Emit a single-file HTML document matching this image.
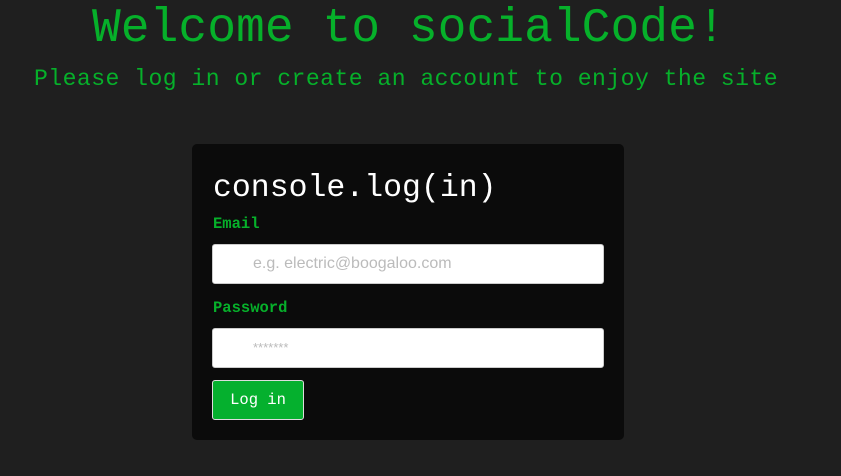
<!DOCTYPE html>
<html><head><style>
body{margin:0;width:841px;height:476px;background:#1f1f1f;position:relative;overflow:hidden;font-family:"Liberation Mono",monospace}
.a{position:absolute;white-space:nowrap}
h1{margin:0;position:absolute;left:92px;top:4px;font-size:48px;font-weight:normal;color:#06b02a;line-height:50px;white-space:nowrap}
.sub{left:34px;top:65px;font-size:23.1px;letter-spacing:0.45px;color:#06b02a;line-height:28px}
.card{position:absolute;left:192px;top:144px;width:432px;height:296px;background:#0b0b0b;border-radius:5px}
.t{left:213px;top:171px;font-size:31.5px;color:#fff;line-height:36px}
.l{font-size:15.5px;font-weight:bold;color:#06b02a;left:213px}
.in{position:absolute;left:212px;width:390px;height:38px;background:#fff;border:1px solid #ccc;border-radius:3px}
.ph{position:absolute;left:40px;top:10px;font:16px "Liberation Sans",sans-serif;color:#bbb}
.btn{position:absolute;left:212px;top:380px;width:90px;height:38px;background:#05b02e;border:1px solid #ddd;border-radius:3px;color:#fff;font-size:15.5px;text-align:center;line-height:38px}
</style></head><body>
<h1>Welcome to socialCode!</h1>
<div class="a sub">Please log in or create an account to enjoy the site</div>
<div class="card"></div>
<div class="a t">console.log(in)</div>
<div class="a l" style="top:215px">Email</div>
<div class="in" style="top:244px"><span class="ph">e.g. electric@boogaloo.com</span></div>
<div class="a l" style="top:299px">Password</div>
<div class="in" style="top:328px"><span class="ph" style="font-size:13px;top:11px;color:#bbb">*******</span></div>
<div class="btn">Log in</div>
</body></html>
